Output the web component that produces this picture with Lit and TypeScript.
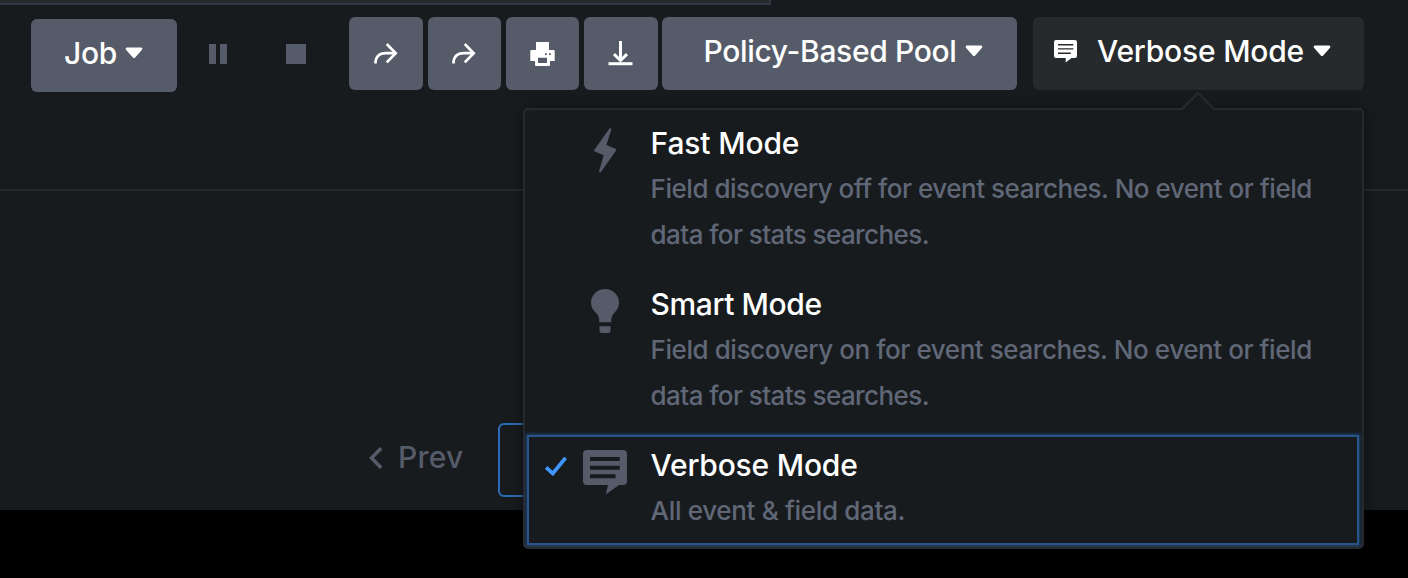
import { LitElement, html, css, svg } from "lit";

const caret = html`<svg class="caret" width="18" height="12" viewBox="0 0 18 12"><path d="M2 .5h14a1.3 1.3 0 0 1 1 2.2l-6.800 7.700a1.600 1.600 0 0 1-2.400 0L1 2.700A1.300 1.300 0 0 1 2 .5z" fill="#fff"/></svg>`;

const share = html`<svg class="share" width="24" height="22" viewBox="0 0 24 22" fill="none" stroke="#fff" stroke-width="2.700"><path d="M1.500 20.500C1.500 13.500 5 10.200 12 10.200H22"/><path d="M14 2l8 8.200-8 8.200" stroke-linecap="square" stroke-linejoin="miter" transform="translate(-.3 0)"/></svg>`;

const printer = html`<svg width="25" height="24" viewBox="0 0 25 24"><path fill="#fff" fill-rule="evenodd" d="M6 0h13v8h4.500a1.200 1.200 0 0 1 1.200 1.200V19H20v3.500A1.300 1.300 0 0 1 18.700 24H6.300A1.300 1.300 0 0 1 5 22.500V19H.3V9.200A1.200 1.200 0 0 1 1.500 8H6zM8 15.700V21h9v-5.300zM15 11.200v1.800h1.800v-1.800zM19 11.200v1.800h1.800v-1.800z"/></svg>`;

const download = html`<svg class="dl" width="25" height="25" viewBox="0 0 25 25" fill="none" stroke="#fff" stroke-width="3"><path d="M12.500 0v19M6 13.200l6.500 6.300 6.500-6.300"/><path d="M.5 22.700h24"/></svg>`;

const bubble = svg`<path fill="currentColor" fill-rule="evenodd" d="M4 0H40a4 4 0 0 1 4 4V31a4 4 0 0 1-4 4H36L22.700 44.500L25 35H4a4 4 0 0 1-4-4V4A4 4 0 0 1 4 0zM7 7v4H36.700V7zM7 15.700v4H36.700v-4zM7 24.300v4H32.500v-4z"/>`;
const bubbleSmall = svg`<path fill="currentColor" fill-rule="evenodd" d="M2 0H21a2 2 0 0 1 2 2V16a2 2 0 0 1-2 2H17.500L11.700 22.500V18H2a2 2 0 0 1-2-2V2A2 2 0 0 1 2 0zM4 4v1.400H19.300V4zM4 8.200v1.400H19.300V8.200zM4 12.500v1.400H16.800v-1.400z"/>`;

const bolt = html`<svg width="44" height="45" viewBox="0 0 44 45"><path fill="currentColor" d="M26.500.6C27.500-.3 28.800.3 28.300 1.700L23.400 17 32.400 20.800C33.200 21.200 33.300 22 32.900 22.700L18.300 43.600C17.300 44.900 15.700 44.300 16.200 42.700L20.700 27.300 11.800 23.500C11 23.100 10.900 22.400 11.400 21.700Z"/></svg>`;

const bulb = html`<svg width="44" height="45" viewBox="0 0 44 45"><path fill="currentColor" d="M22 0A14 14 0 0 1 36 14C36 22.500 28.200 23.500 28.200 31V33.300H16.200V31C16.200 23.500 8 22.500 8 14A14 14 0 0 1 22 0zM16.500 37.300h11v4.200a2.500 2.500 0 0 1-2.500 2.500h-6a2.500 2.500 0 0 1-2.500-2.500z"/></svg>`;

interface Mode {
  cls: string;
  name: string;
  lines: string[];
  icon: unknown;
  selected?: boolean;
}

const modes: Mode[] = [
  { cls: "fast", name: "Fast Mode", icon: bolt, lines: ["Field discovery off for event searches. No event or field", "data for stats searches."] },
  { cls: "smart", name: "Smart Mode", icon: bulb, lines: ["Field discovery on for event searches. No event or field", "data for stats searches."] },
  { cls: "verbose", name: "Verbose Mode", icon: html`<svg width="44" height="45" viewBox="0 0 44 45">${bubble}</svg>`, lines: ["All event & field data."], selected: true },
];

class AppRoot extends LitElement {
  static styles = css`
    :host { display: block; width: 1408px; height: 578px; overflow: hidden; background: #000; position: relative;
      font-family: Inter, "Open Sans", sans-serif; font-size: 30px; font-weight: 450; color: #fff; }
    * { box-sizing: border-box; }
    svg { display: block; flex: none; }
    .page { height: 510px; background: #181b1e; display: flex; flex-direction: column; }
    .strip { width: 771px; height: 5px; background: #272a2c; border: solid #2f3740; border-width: 0 2px 2px 0; flex: none; }
    .bar { height: 186px; flex: none; display: flex; align-items: flex-start; padding: 12px 44px 0 31px; border-bottom: 2px solid #26292c; }
    .btn { height: 73px; border-radius: 6px; background: #555b69; display: flex; align-items: center; justify-content: center; flex: none; white-space: nowrap; line-height: 40px; }
    .job { width: 146px; margin-top: 2px; padding: 0 1px 5px 0; letter-spacing: -.3px; }
    .job .caret { margin: 0 0 0 8px; }
    .glyphs { display: flex; align-items: center; height: 20px; margin: 27px 43px 0 32px; gap: 59px; flex: none; }
    .pause { width: 18px; height: 20px; border: solid #555b69; border-width: 0 7px; }
    .stop { width: 20px; height: 20px; background: #555b69; }
    .group { display: flex; flex: none; gap: 5px; }
    .sq { width: 73px; }
    .sq.wide { width: 74px; }
    .share { margin-right: 1px; }
    .dl { margin-right: 2px; }
    .pool { width: 355px; margin-left: 4px; padding: 0 0 5px 8px; letter-spacing: -.36px; }
    .pool .caret, .mode .caret { margin: -1px 0 0 9px; }
    .mode { width: 331px; margin-left: 16px; background: #272a2c; justify-content: flex-start; padding: 0 0 5px 21px; }
    .mode span { margin-left: 20px; letter-spacing: -.2px; }
    .body { flex: 1; padding: 232px 0 0 369px; display: flex; align-items: flex-start; }
    .prev { display: flex; align-items: center; height: 73px; color: #555b69; letter-spacing: .2px; padding-bottom: 6px; width: 129px; gap: 15px; flex: none; }
    .prev svg { margin: 2px 0 0; }
    .current { width: 74px; height: 74px; border: 2px solid #2b6cb8; border-radius: 6px; flex: none; }
    .menu { position: absolute; left: 523px; top: 108px; width: 841px; height: 441px; background: #181b1e; border: 2px solid #272a2d; border-bottom-width: 4px; border-radius: 5px; padding: 5px 5px 0 4px; box-shadow: 0 2px 14px rgba(0,0,0,.45); }
    .tip { position: absolute; left: 656px; top: -18px; }
    .item { height: 161px; padding: 5px 0 0 16px; display: flex; align-items: flex-start; line-height: 46px; white-space: nowrap; }
    .item.verbose { height: 106px; box-shadow: 0 0 0 2px #28558c, 0 0 3px 3px #1f446e; }
    .check { width: 20px; padding-top: 15px; flex: none; }
    .icon { width: 44px; margin: 8px 0 0 17.600px; color: #555b69; flex: none; }
    .text { margin-left: 24px; }
    .desc { font-size: 26px; color: #606777; }
    .fast .name { letter-spacing: -.15px; }
    .smart .name { letter-spacing: -.4px; }
    .verbose .name { letter-spacing: -.2px; }
    .line { letter-spacing: -.475px; }
    .smart .line { letter-spacing: -.430px; }
    .line.last, .smart .line.last { letter-spacing: -.58px; }
    .verbose .line.last { letter-spacing: -.33px; }
  `;

  render() {
    return html`
      <div class="page">
        <div class="strip"></div>
        <div class="bar">
          <div class="btn job">Job${caret}</div>
          <div class="glyphs"><div class="pause"></div><div class="stop"></div></div>
          <div class="group">
            <div class="btn sq wide">${share}</div>
            <div class="btn sq">${share}</div>
            <div class="btn sq">${printer}</div>
            <div class="btn sq wide">${download}</div>
          </div>
          <div class="btn pool">Policy-Based Pool${caret}</div>
          <div class="btn mode"><svg width="23" height="23" viewBox="0 0 23 23">${bubbleSmall}</svg><span>Verbose Mode</span>${caret}</div>
        </div>
        <div class="body">
          <div class="prev"><svg width="14" height="22" viewBox="0 0 14 22" fill="none" stroke="#555b69" stroke-width="3.500"><path d="M12.200 1.200L2.500 11l9.700 9.800"/></svg>Prev</div>
          <div class="current"></div>
        </div>
      </div>
      <div class="menu">
        <svg class="tip" width="34" height="18" viewBox="0 0 34 18"><path d="M0 18L17 1 34 18z" fill="#181b1e"/><path d="M0 17h1L17 1l16 16h1" fill="none" stroke="#272a2d" stroke-width="2"/></svg>
        ${modes.map((m) => html`
          <div class="item ${m.cls}">
            <div class="check">${m.selected ? html`<svg width="22" height="19" viewBox="0 0 22 19" fill="none" stroke="#3e97ff" stroke-width="3.700"><path d="M1.200 11.200L8 17.200 20.800 1.500" transform="translate(-.2 -.7)"/></svg>` : ""}</div>
            <div class="icon">${m.icon}</div>
            <div class="text">
              <div class="name">${m.name}</div>
              <div class="desc">${m.lines.map((l, i) => html`<div class="line ${i === m.lines.length - 1 ? "last" : ""}">${l}</div>`)}</div>
            </div>
          </div>`)}
      </div>`;
  }
}
customElements.define("app-root", AppRoot);
